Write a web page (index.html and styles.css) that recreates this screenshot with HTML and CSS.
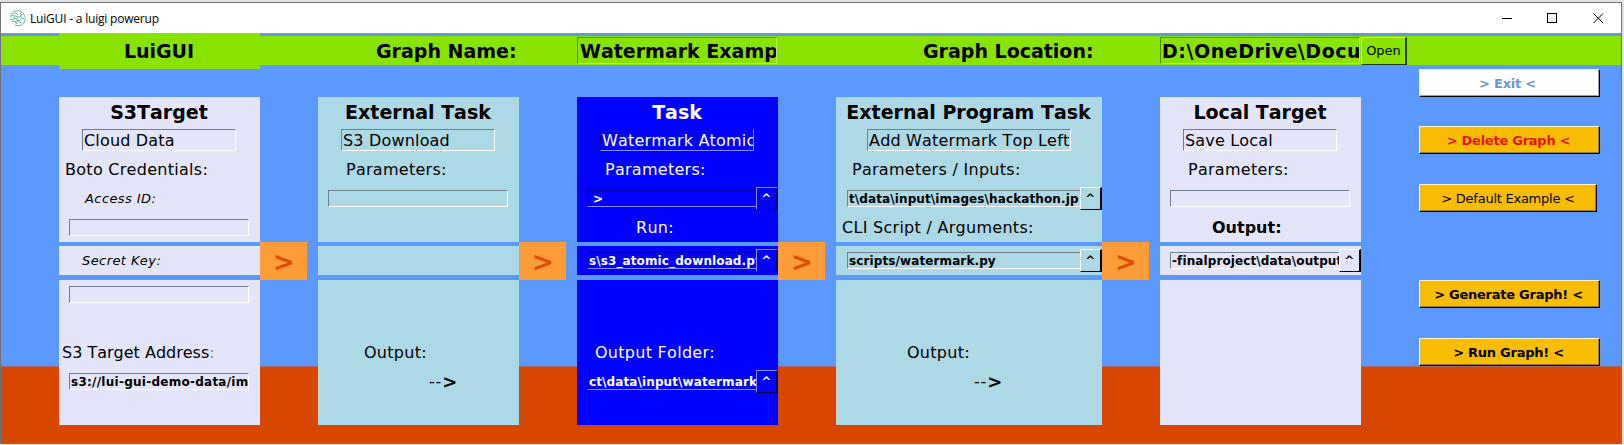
FILE: index.html
```html
<!DOCTYPE html>
<html lang="en">
<head>
<meta charset="utf-8">
<title>LuiGUI - a luigi powerup</title>
<link rel="stylesheet" href="styles.css">
</head>
<body>
<div class="window">
  <div class="titlebar">
    <svg class="app-icon" width="17" height="17" viewBox="0 0 17 17" fill="none" stroke="#5fbf90" stroke-width="1">
      <path d="M2 6C2 3 4 1 7 1c4-1 7 1 8 4 2 3 1 7-1 9-2 2-6 2-8 1"/>
      <path d="M1 7c2-2 5-2 7 0 2-1 4-1 5 1M4 4l3-1 2 2M1 9l3 1 2-2 3 3 3-1M3 12l3-1 2 3M11 3l2 2-2 1M12 8l3 1M10 12l3 1M6 6l-2 2M9 8v3l-3 2"/>
    </svg>
    <span class="app-title">LuiGUI - a luigi powerup</span>
    <svg class="controls" width="102" height="12" viewBox="0 0 102 12" fill="none" stroke="#000" stroke-width="1">
      <path d="M0 6.5h10"/>
      <rect x="45.5" y="1.5" width="9" height="9"/>
      <path d="M91.5 1.5l9.5 9.5M101 1.5l-9.5 9.5"/>
    </svg>
  </div>

  <div class="header">
    <div class="logo heading">LuiGUI</div>
    <div class="graph-name heading">Graph Name:</div>
    <div class="entry header-entry heading">Watermark Examp</div>
    <div class="graph-location heading">Graph Location:</div>
    <div class="entry header-entry path heading">D:\OneDrive\Docu</div>
    <div class="btn open">Open</div>
  </div>

  <div class="main">
    <div class="card lavender">
      <div class="part top">
        <div class="title heading">S3Target</div>
        <div class="entry name">Cloud Data</div>
        <div class="row x6">Boto Credentials:</div>
        <div class="row small x26">Access ID:</div>
        <div class="row"><div class="entry field"></div></div>
      </div>
      <div class="part row small x22">Secret Key:</div>
      <div class="part bottom">
        <div class="row"><div class="entry field"></div></div>
        <div class="row"></div>
        <div class="row tight x3">S3 Target Address<span class="thin">:</span></div>
        <div class="row"><div class="entry field address">s3://lui-gui-demo-data/im</div></div>
      </div>
    </div>
    <div class="arrow">&gt;</div>

    <div class="card pale">
      <div class="part top">
        <div class="title heading">External Task</div>
        <div class="entry name">S3 Download</div>
        <div class="row x28">Parameters:</div>
        <div class="row"><div class="entry field"></div></div>
      </div>
      <div class="part row"></div>
      <div class="part bottom">
        <div class="row"></div>
        <div class="row"></div>
        <div class="row x45">Output:</div>
        <div class="row dash x110">--<b>&gt;</b></div>
      </div>
    </div>
    <div class="arrow">&gt;</div>

    <div class="card blue">
      <div class="part top">
        <div class="title heading">Task</div>
        <div class="entry name">Watermark Atomic</div>
        <div class="row x28">Parameters:</div>
        <div class="row"><div class="entry field prompt">&gt;</div><div class="btn pick">^</div></div>
        <div class="row x58">Run:</div>
      </div>
      <div class="part row"><div class="entry field">s\s3_atomic_download.py</div><div class="btn pick">^</div></div>
      <div class="part bottom">
        <div class="row"></div>
        <div class="row"></div>
        <div class="row x18">Output Folder:</div>
        <div class="row"><div class="entry field">ct\data\input\watermark</div><div class="btn pick">^</div></div>
      </div>
    </div>
    <div class="arrow">&gt;</div>

    <div class="card pale wide">
      <div class="part top">
        <div class="title heading">External Program Task</div>
        <div class="entry name">Add Watermark Top Left</div>
        <div class="row x16">Parameters / Inputs:</div>
        <div class="row"><div class="entry field">t\data\input\images\hackathon.jp</div><div class="btn pick">^</div></div>
        <div class="row x6">CLI Script / Arguments:</div>
      </div>
      <div class="part row"><div class="entry field">scripts/watermark.py</div><div class="btn pick">^</div></div>
      <div class="part bottom">
        <div class="row"></div>
        <div class="row"></div>
        <div class="row x70">Output:</div>
        <div class="row dash x137">--<b>&gt;</b></div>
      </div>
    </div>
    <div class="arrow">&gt;</div>

    <div class="card lavender">
      <div class="part top">
        <div class="title heading">Local Target</div>
        <div class="entry name">Save Local</div>
        <div class="row x28">Parameters:</div>
        <div class="row"><div class="entry field"></div></div>
        <div class="row tight x52"><b>Output:</b></div>
      </div>
      <div class="part row"><div class="entry field">-finalproject\data\output</div><div class="btn pick">^</div></div>
      <div class="part bottom"></div>
    </div>

    <div class="sidebar">
      <div class="btn action exit">&gt; Exit &lt;</div>
      <div class="btn action delete">&gt; Delete Graph &lt;</div>
      <div class="btn action default">&gt; Default Example &lt;</div>
      <div class="btn action generate">&gt; Generate Graph! &lt;</div>
      <div class="btn action run">&gt; Run Graph! &lt;</div>
    </div>
  </div>
</div>
</body>
</html>
```

FILE: styles.css
```css
* { box-sizing: border-box; }

body {
  margin: 0;
  height: 445px;
  overflow: hidden;
  background: #e2e2e2;
  padding-top: 2px;
  font: 16px "DejaVu Sans", Verdana, sans-serif;
  font-kerning: none;
  color: #000;
}

.window {
  display: flex;
  flex-direction: column;
  width: 1622px;
  height: 442px;
  border: 1px solid #6f7478;
  white-space: nowrap;
  background: linear-gradient(#5b98ff 0 363px, #a5686c 363px 364px, #d74700 364px);
}

.titlebar {
  display: flex;
  align-items: center;
  height: 30px;
  flex: none;
  background: #fff;
  padding: 0 17px 0 8px;
}
.app-icon { margin-right: 4px; }
.app-title {
  flex: 1;
  font: 12px "Open Sans", "Noto Sans", sans-serif;
  letter-spacing: -0.2px;
}

.heading { font-size: 19px; font-weight: bold; }

.header {
  display: flex;
  height: 36px;
  flex: none;
  padding-left: 58px;
  line-height: 28px;
  background: linear-gradient(#6698d8 0 3px, #8ae200 3px 32px, #5b98ff 32px);
}
.logo {
  width: 201px;
  padding-right: 1px;
  background: #8ae200;
  text-align: center;
  line-height: 36px;
}
.graph-name { width: 317px; padding: 4px 0 0 116px; }
.graph-location { width: 383px; padding: 4px 0 0 146px; }

.entry {
  overflow: hidden;
  border: 1px solid;
  border-color: #70808c #fff #fff #70808c;
}
.header-entry {
  width: 200px;
  height: 27px;
  margin-top: 4px;
  padding-left: 2px;
  line-height: 26px;
  border-color: #4f8a1c #b5ee5c #b5ee5c #4f8a1c;
}
.path { padding-left: 1px; letter-spacing: 0.55px; }

.btn {
  display: flex;
  align-items: center;
  justify-content: center;
  border: 1px solid;
  font-size: 13px;
}
.open {
  width: 46px;
  height: 28px;
  margin: 4px 0 0 1px;
  border-color: #c8f58a #1d3800 #1d3800 #c8f58a;
  border-right-width: 2px;
}

.main { display: flex; flex: 1; }

.card {
  display: flex;
  flex-direction: column;
  width: 201px;
  margin: 28px 0 0 11px;
}
.card:first-child { margin-left: 58px; }
.wide { width: 266px; }
.top { height: 145px; margin-bottom: 4px; }
.bottom { height: 145px; margin-top: 5px; }
.lavender .part { background: #e4e5f9; }
.pale .part { background: #add8e6; }
.blue .part { background: #0000ff; color: #fff; }

.title { height: 32px; padding-right: 1px; line-height: 31px; text-align: center; }
.name {
  width: 154px;
  height: 22px;
  margin: 0 0 4px 23px;
  padding-left: 1px;
  line-height: 21px;
  letter-spacing: 0.18px;
}
.wide .name { width: 204px; margin-left: 31px; }

.row { display: flex; align-items: center; height: 29px; letter-spacing: 0.28px; }
.small { font-size: 13px; font-style: italic; letter-spacing: 0.42px; }
.tight { letter-spacing: 0; }
.dash { letter-spacing: 0.8px; }
.dash b { font-size: 18px; }
.thin { color: #8a8aa0; }

.x3 { padding-left: 3px; }
.x6 { padding-left: 6px; }
.x16 { padding-left: 16px; }
.x18 { padding-left: 18px; }
.x22 { padding-left: 23px; }
.x26 { padding-left: 26px; }
.x28 { padding-left: 28px; }
.x45 { padding-left: 46px; }
.x52 { padding-left: 52px; }
.x58 { padding-left: 59px; }
.x70 { padding-left: 71px; }
.x110 { padding-left: 111px; }
.x137 { padding-left: 138px; }

.field {
  width: 180px;
  height: 17px;
  margin-left: 10px;
  padding-left: 1px;
  font-size: 12px;
  font-weight: bold;
  line-height: 16px;
  letter-spacing: 0.11px;
}
.field:not(:last-child) { width: auto; flex: 1; border-right: 0; }
.wide .field { margin-left: 11px; }
.field.prompt { padding-left: 5px; }
.address { letter-spacing: 0.26px; }
.blue .entry { border-color: #0000a8 #8c8cff #8c8cff #0000a8; }

.pick {
  width: 22px;
  height: 23px;
  font-size: 12px;
  font-weight: bold;
  border-color: #fff #000 #000 #fff;
  border-right-width: 2px;
}
.blue .pick { border-color: #8c8cff #000050 #000050 #8c8cff; }

.arrow {
  width: 47px;
  height: 38px;
  margin-top: 173px;
  padding-left: 1px;
  background: #ff9c3a;
  color: #e04c00;
  font-size: 26px;
  font-weight: bold;
  line-height: 40px;
  text-align: center;
}

.sidebar { margin-left: 58px; }
.action {
  width: 181px;
  height: 28px;
  padding-right: 2px;
  font-weight: bold;
  letter-spacing: -0.25px;
  background: #f8bd00;
  border-color: #fff6c8 #000 #000 #fff6c8;
  box-shadow: inset -1px -1px #a08020;
}
.exit { padding-right: 4px; background: #fff; color: #6495e0; box-shadow: inset -1px -1px #a0a0a0; }
.delete { margin-top: 29px; color: #e51400; }
.default { margin-top: 30px; width: 178px; padding-right: 0; font-weight: normal; }
.generate { margin-top: 68px; }
.run { margin-top: 30px; }
```
